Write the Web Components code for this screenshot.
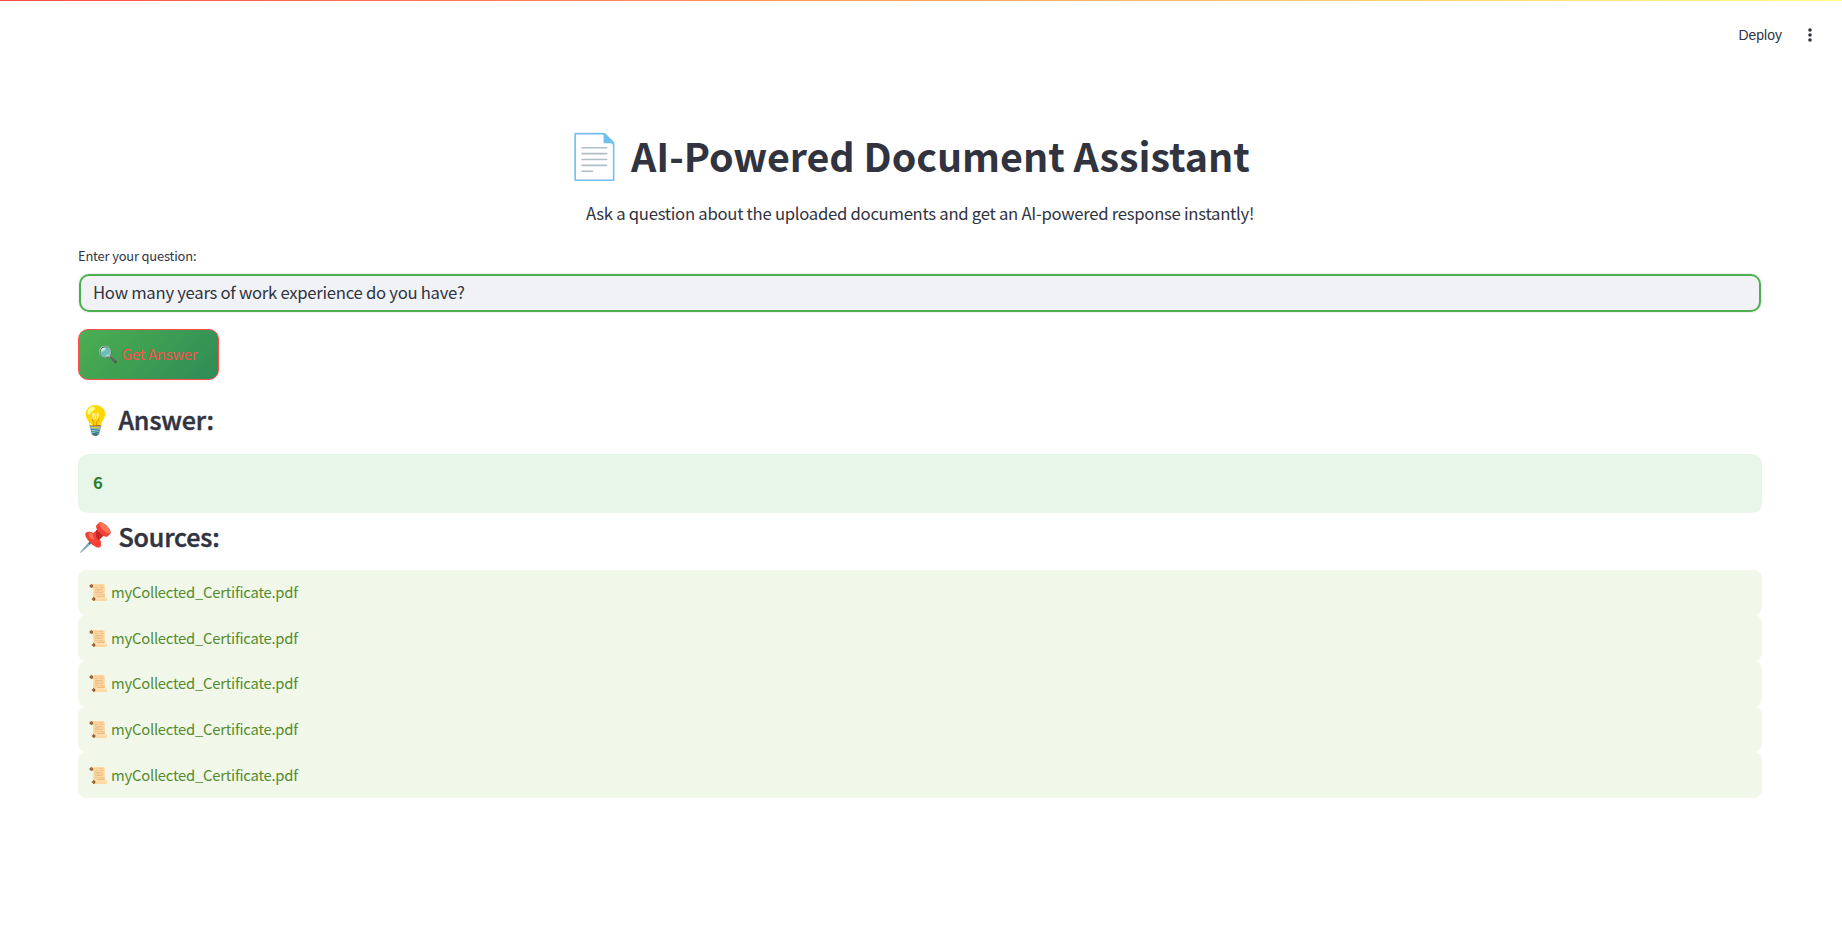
<!DOCTYPE html>
<html lang="en">
<head>
<meta charset="utf-8">
<title>AI-Powered Document Assistant</title>
<style>
html{height:100%}
body{margin:0;min-height:100%;background:#fff;color:#31333f;font-family:"Noto Sans CJK SC","Noto Color Emoji",sans-serif}
</style>
</head>
<body>
<assistant-app></assistant-app>
<script>
const define = (name, html) => {
  const tpl = document.createElement('template');
  tpl.innerHTML = html;
  customElements.define(name, class extends HTMLElement {
    constructor() {
      super();
      this.attachShadow({ mode: 'open' }).append(tpl.content.cloneNode(true));
    }
  });
};

/* Emoji keep a nominal size of their own and never stretch the line. */
define('emoji-icon', `
<style>:host{display:inline;font-family:"Noto Color Emoji";font-weight:400;line-height:0;letter-spacing:0;font-size:var(--emoji,16px);-webkit-text-stroke:0}</style><slot></slot>`);

define('app-toolbar', `
<style>
:host{display:block;height:60px;box-sizing:border-box}
.bar{height:1px;background:linear-gradient(90deg,#ff4b4b,#fffd80)}
.tools{height:59px;display:flex;align-items:center;justify-content:flex-end;gap:20px;padding-right:24px;box-sizing:border-box}
.deploy{font:14px/20px "Liberation Sans",sans-serif;margin-top:9px}
svg{display:block;margin-top:9px}
</style>
<div class="bar"></div>
<div class="tools"><span class="deploy">Deploy</span>
<svg width="16" height="16" viewBox="0 0 16 16" fill="#31333f"><circle cx="8" cy="3" r="1.8"/><circle cx="8" cy="8" r="1.8"/><circle cx="8" cy="13" r="1.8"/></svg></div>`);

define('page-title', `
<style>
:host{display:block;--emoji:44px;padding-right:23px;text-align:center;font-weight:700;font-size:39.4px;line-height:52.8px;letter-spacing:-.03px;white-space:nowrap}
</style><slot></slot>`);

define('page-intro', `
<style>:host{display:block;text-align:center;font-size:16.7px;letter-spacing:-.28px;line-height:28.8px;margin-top:16.4px}</style><slot></slot>`);

define('question-field', `
<style>
:host{display:block;margin-top:17.4px}
.label{font-size:12.9px;letter-spacing:-.17px;line-height:21px;margin-bottom:7px}
.wrap{border:1px solid #f0f2f6;border-radius:10px;height:40px;box-sizing:border-box}
.box{height:38px;box-sizing:border-box;border:2px solid #4caf50;border-radius:10px;background:#f0f2f6;padding:0 12px;font-size:16.7px;letter-spacing:-.28px;line-height:33px}
</style>
<div class="label"><slot name="label"></slot></div>
<div class="wrap"><div class="box"><slot></slot></div></div>`);

define('action-button', `
<style>
:host{display:block;margin-top:16px}
button{display:flex;align-items:center;justify-content:center;width:141px;height:51px;padding:0 1px 2px 0;margin:0;box-sizing:border-box;border:1px solid #ff4b4b;border-radius:10px;background:linear-gradient(135deg,#4caf50,#2e8b57) border-box;color:#ff4b4b;font-family:inherit;font-size:14.8px;letter-spacing:-.25px;line-height:25px}
</style><button><span><slot></slot></span></button>`);

define('section-heading', `
<style>
:host{display:block;--emoji:28px;font-weight:500;font-size:25.07px;letter-spacing:-.12px;line-height:33.6px;-webkit-text-stroke:.5px currentColor}
</style><slot></slot>`);

define('answer-card', `
<style>
:host{display:block;height:59px;box-sizing:border-box;padding:14px 15px;border-radius:10px;background:#e8f5e9;color:#2e7d32;font-weight:700;font-size:16.6px;line-height:29px}
</style><slot></slot>`);

define('source-item', `
<style>
:host{display:block;height:45.6px;box-sizing:border-box;padding:9.4px 10px;border-radius:8px;background:#f1f8e9;color:#558b2f;font-size:14.8px;letter-spacing:-.23px;line-height:25.6px}
</style><slot></slot>`);

define('assistant-app', `
<style>
:host{display:block}
main{padding:69.4px 80px 0 78px}
#answer{margin-top:23px}
answer-card{margin-top:17.4px}
#sources{margin-top:7px}
.list{margin-top:16.4px}
</style>
<app-toolbar></app-toolbar>
<main>
<page-title><emoji-icon>📄</emoji-icon> AI-Powered Document Assistant</page-title>
<page-intro>Ask a question about the uploaded documents and get an AI-powered response instantly!</page-intro>
<question-field><span slot="label">Enter your question:</span>How many years of work experience do you have?</question-field>
<action-button><emoji-icon>🔍</emoji-icon> Get Answer</action-button>
<section-heading id="answer"><emoji-icon>💡</emoji-icon> Answer:</section-heading>
<answer-card>6</answer-card>
<section-heading id="sources"><emoji-icon>📌</emoji-icon> Sources:</section-heading>
<div class="list">
<source-item><emoji-icon>📜</emoji-icon> myCollected_Certificate.pdf</source-item>
<source-item><emoji-icon>📜</emoji-icon> myCollected_Certificate.pdf</source-item>
<source-item><emoji-icon>📜</emoji-icon> myCollected_Certificate.pdf</source-item>
<source-item><emoji-icon>📜</emoji-icon> myCollected_Certificate.pdf</source-item>
<source-item><emoji-icon>📜</emoji-icon> myCollected_Certificate.pdf</source-item>
</div>
</main>`);
</script>
</body>
</html>
